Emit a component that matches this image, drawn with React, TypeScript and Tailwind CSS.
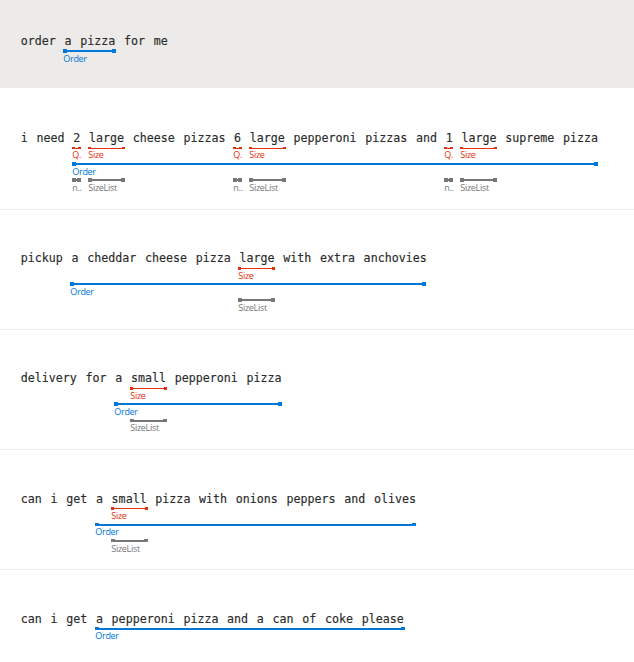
import React from "react";

type Tone = "red" | "blue" | "gray";

interface Mark {
  label: string;
  // Gap before the mark and its width
  box: string;
}

interface Lane {
  tone: Tone;
  // Distance to the next lane
  height: string;
  // Height of the end caps
  caps: string;
  // Space between the bar and its label
  labelGap: string;
  marks: Mark[];
}

interface Utterance {
  text: string;
  row: string;
  textHeight: string;
  lanes: Lane[];
}

const divided = "border-b border-[#eeeeee]";

const utterances: Utterance[] = [
  {
    text: "order a pizza for me",
    row: "h-[88px] bg-[#ecebe9] pt-[33px]",
    textHeight: "h-4",
    lanes: [
      { tone: "blue", height: "h-[18px]", caps: "h-1", labelGap: "mt-0", marks: [{ label: "Order", box: "ml-[63px] w-[53px]" }] },
    ],
  },
  {
    text: "i need 2 large cheese pizzas 6 large pepperoni pizzas and 1 large supreme pizza",
    row: `h-[122px] pt-[42px] ${divided}`,
    textHeight: "h-[17px]",
    lanes: [
      {
        tone: "red",
        height: "h-[15px]",
        caps: "h-[2px]",
        labelGap: "mt-0",
        marks: [
          { label: "Q.", box: "ml-[72px] w-[9px]" },
          { label: "Size", box: "ml-[7px] w-[37px]" },
          { label: "Q.", box: "ml-[108px] w-[9px]" },
          { label: "Size", box: "ml-[7px] w-[37px]" },
          { label: "Q.", box: "ml-[158px] w-[9px]" },
          { label: "Size", box: "ml-[7px] w-[37px]" },
        ],
      },
      { tone: "blue", height: "h-4", caps: "h-1", labelGap: "mt-0", marks: [{ label: "Order", box: "ml-[72px] w-[526px]" }] },
      {
        tone: "gray",
        height: "h-[18px]",
        caps: "h-1",
        labelGap: "mt-0",
        marks: [
          { label: "n..", box: "ml-[72px] w-[9px]" },
          { label: "SizeList", box: "ml-[7px] w-[37px]" },
          { label: "n..", box: "ml-[108px] w-[9px]" },
          { label: "SizeList", box: "ml-[7px] w-[37px]" },
          { label: "n..", box: "ml-[158px] w-[9px]" },
          { label: "SizeList", box: "ml-[7px] w-[37px]" },
        ],
      },
    ],
  },
  {
    text: "pickup a cheddar cheese pizza large with extra anchovies",
    row: `h-[120px] pt-10 ${divided}`,
    textHeight: "h-[17px]",
    lanes: [
      { tone: "red", height: "h-[15px]", caps: "h-[3px]", labelGap: "mt-0", marks: [{ label: "Size", box: "ml-[238px] w-[37px]" }] },
      { tone: "blue", height: "h-4", caps: "h-1", labelGap: "mt-0", marks: [{ label: "Order", box: "ml-[70px] w-[356px]" }] },
      { tone: "gray", height: "h-[18px]", caps: "h-1", labelGap: "mt-0", marks: [{ label: "SizeList", box: "ml-[238px] w-[37px]" }] },
    ],
  },
  {
    text: "delivery for a small pepperoni pizza",
    row: `h-[120px] pt-10 ${divided}`,
    textHeight: "h-[17px]",
    lanes: [
      { tone: "red", height: "h-[15px]", caps: "h-[3px]", labelGap: "mt-0", marks: [{ label: "Size", box: "ml-[130px] w-[37px]" }] },
      { tone: "blue", height: "h-[17px]", caps: "h-1", labelGap: "mt-0", marks: [{ label: "Order", box: "ml-[114px] w-[168px]" }] },
      { tone: "gray", height: "h-[18px]", caps: "h-[3px]", labelGap: "mt-0", marks: [{ label: "SizeList", box: "ml-[130px] w-[37px]" }] },
    ],
  },
  {
    text: "can i get a small pizza with onions peppers and olives",
    row: `h-[120px] pt-[41px] ${divided}`,
    textHeight: "h-4",
    lanes: [
      { tone: "red", height: "h-4", caps: "h-[3px]", labelGap: "mt-0", marks: [{ label: "Size", box: "ml-[111px] w-[37px]" }] },
      { tone: "blue", height: "h-4", caps: "h-[3px]", labelGap: "mt-0", marks: [{ label: "Order", box: "ml-[95px] w-[321px]" }] },
      { tone: "gray", height: "h-[18px]", caps: "h-[3px]", labelGap: "mt-px", marks: [{ label: "SizeList", box: "ml-[111px] w-[37px]" }] },
    ],
  },
  {
    text: "can i get a pepperoni pizza and a can of coke please",
    row: "h-[92px] pt-[41px]",
    textHeight: "h-4",
    lanes: [
      { tone: "blue", height: "h-[18px]", caps: "h-[3px]", labelGap: "mt-0", marks: [{ label: "Order", box: "ml-[95px] w-[310px]" }] },
    ],
  },
];

const tones: Record<Tone, { cap: string; line: string; ink: string }> = {
  red: { cap: "w-[3px] bg-[#e5300f]", line: "h-px bg-[#e5300f]", ink: "text-[#e5300f]" },
  blue: { cap: "w-1 bg-[#0078d7]", line: "h-[2px] bg-[#0078d7]", ink: "text-[#0078d7]" },
  gray: { cap: "w-1 bg-[#777777]", line: "h-[2px] bg-[#777777]", ink: "text-[#777777]" },
};

function MarkBar({ mark, lane }: { mark: Mark; lane: Lane }) {
  const tone = tones[lane.tone];
  return (
    <div className={`shrink-0 ${mark.box}`}>
      <div className={`flex ${lane.caps}`}>
        <div className={tone.cap} />
        <div className={`mt-px flex-1 ${tone.line}`} />
        <div className={tone.cap} />
      </div>
      <div
        className={`h-3 pl-[0.3px] font-['Open_Sans',sans-serif] text-[9px] leading-3 tracking-[-0.3px] whitespace-nowrap ${lane.labelGap} ${tone.ink}`}
      >
        {mark.label}
      </div>
    </div>
  );
}

function UtteranceRow({ item }: { item: Utterance }) {
  return (
    <section className={`flex flex-col overflow-hidden ${item.row}`}>
      <p
        className={`shrink-0 pl-[20.8px] font-['DejaVu_Sans_Mono',monospace] text-[11.65px] leading-4 whitespace-nowrap text-[#2a2a2a] [word-spacing:1.68px] [-webkit-text-stroke:0.15px_#2a2a2a] ${item.textHeight}`}
      >
        {item.text}
      </p>
      {item.lanes.map((lane) => (
        <div key={lane.tone} className={`flex shrink-0 items-start ${lane.height}`}>
          {lane.marks.map((mark, i) => (
            <MarkBar key={i} mark={mark} lane={lane} />
          ))}
        </div>
      ))}
    </section>
  );
}

export default function App() {
  return (
    <main className="flex h-[662px] w-[634px] flex-col overflow-hidden bg-white">
      {utterances.map((item) => (
        <UtteranceRow key={item.text} item={item} />
      ))}
    </main>
  );
}
